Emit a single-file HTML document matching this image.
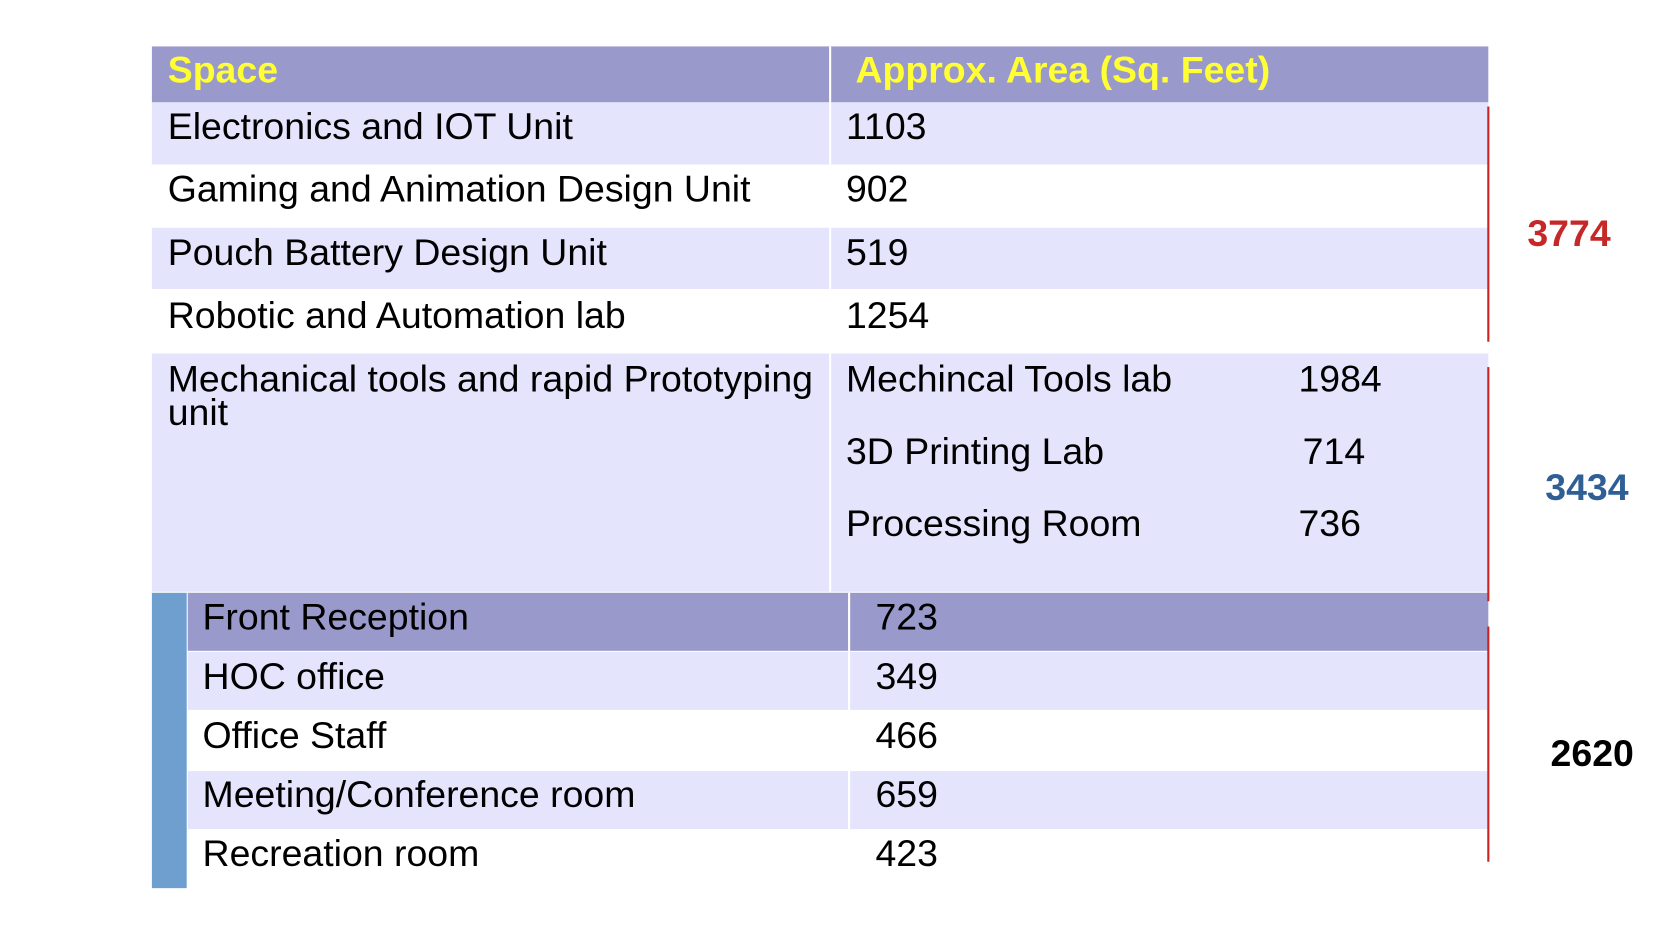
<!DOCTYPE html><html><head><style>
body{margin:0;width:1654px;height:930px;background:#fff;position:relative;font-family:"Liberation Sans",Arial,sans-serif;overflow:hidden}
#w{position:absolute;left:0;top:0;width:1568px;height:882px;transform:scale(1.0548);transform-origin:0 0}
#w div{position:absolute}
.t{font-size:35.5px;color:#000;line-height:33px;white-space:nowrap}
.h{font-size:35.5px;color:#ffff33;font-weight:bold;line-height:33px}
.l{background:#e4e4fc}.p{background:#9999cc}
</style></head><body><div id="w">
<div class="p" style="left:144px;top:44px;width:1267px;height:53px"></div>
<div class="l" style="left:144px;top:97px;width:1267px;height:59px"></div>
<div class="l" style="left:144px;top:216px;width:1267px;height:58px"></div>
<div class="l" style="left:144px;top:335px;width:1267px;height:226px"></div>
<div style="left:786px;top:44px;width:2px;height:517px;background:#fff"></div>
<div style="left:144px;top:333px;width:1267px;height:2px;background:#fff"></div>
<div class="h" style="left:159px;top:50px">Space</div>
<div class="h" style="left:811px;top:50px">Approx. Area (Sq. Feet)</div>
<div class="t" style="left:159px;top:104px">Electronics and IOT Unit</div><div class="t" style="left:802px;top:104px">1103</div>
<div class="t" style="left:159px;top:163px">Gaming and Animation Design Unit</div><div class="t" style="left:802px;top:163px">902</div>
<div class="t" style="left:159px;top:223px">Pouch Battery Design Unit</div><div class="t" style="left:802px;top:223px">519</div>
<div class="t" style="left:159px;top:283px">Robotic and Automation lab</div><div class="t" style="left:802px;top:283px">1254</div>
<div class="t" style="left:159px;top:343px;line-height:32px">Mechanical tools and rapid Prototyping<br>unit</div>
<div class="t" style="left:802px;top:343px">Mechincal Tools lab</div><div class="t" style="left:1231px;top:343px">1984</div>
<div class="t" style="left:802px;top:412px">3D Printing Lab</div><div class="t" style="left:1235px;top:412px">714</div>
<div class="t" style="left:802px;top:480px">Processing Room</div><div class="t" style="left:1231px;top:480px">736</div>
<div style="left:144px;top:562px;width:33px;height:280px;background:#6f9fcf"></div>
<div class="p" style="left:178px;top:562px;width:1233px;height:55px"></div>
<div class="l" style="left:178px;top:618px;width:1233px;height:55px"></div>
<div class="l" style="left:178px;top:731px;width:1233px;height:55px"></div>
<div style="left:804px;top:562px;width:2px;height:224px;background:#fff"></div>
<div class="t" style="left:192px;top:569px">Front Reception</div><div class="t" style="left:830px;top:569px">723</div>
<div class="t" style="left:192px;top:625px">HOC office</div><div class="t" style="left:830px;top:625px">349</div>
<div class="t" style="left:192px;top:681px">Office Staff</div><div class="t" style="left:830px;top:681px">466</div>
<div class="t" style="left:192px;top:737px">Meeting/Conference room</div><div class="t" style="left:830px;top:737px">659</div>
<div class="t" style="left:192px;top:793px">Recreation room</div><div class="t" style="left:830px;top:793px">423</div>
<div style="left:1410px;top:101px;width:2px;height:223px;background:#cc2222"></div>
<div style="left:1410px;top:348px;width:2px;height:222px;background:#cc2222"></div>
<div style="left:1410px;top:594px;width:2px;height:223px;background:#cc2222"></div>
<div style="left:1448px;top:201px;font-size:35.5px;font-weight:bold;color:#c62828">3774</div>
<div style="left:1465px;top:442px;font-size:35.5px;font-weight:bold;color:#2f5f95">3434</div>
<div style="left:1470px;top:694px;font-size:35.5px;font-weight:bold;color:#000">2620</div>
</div></body></html>
